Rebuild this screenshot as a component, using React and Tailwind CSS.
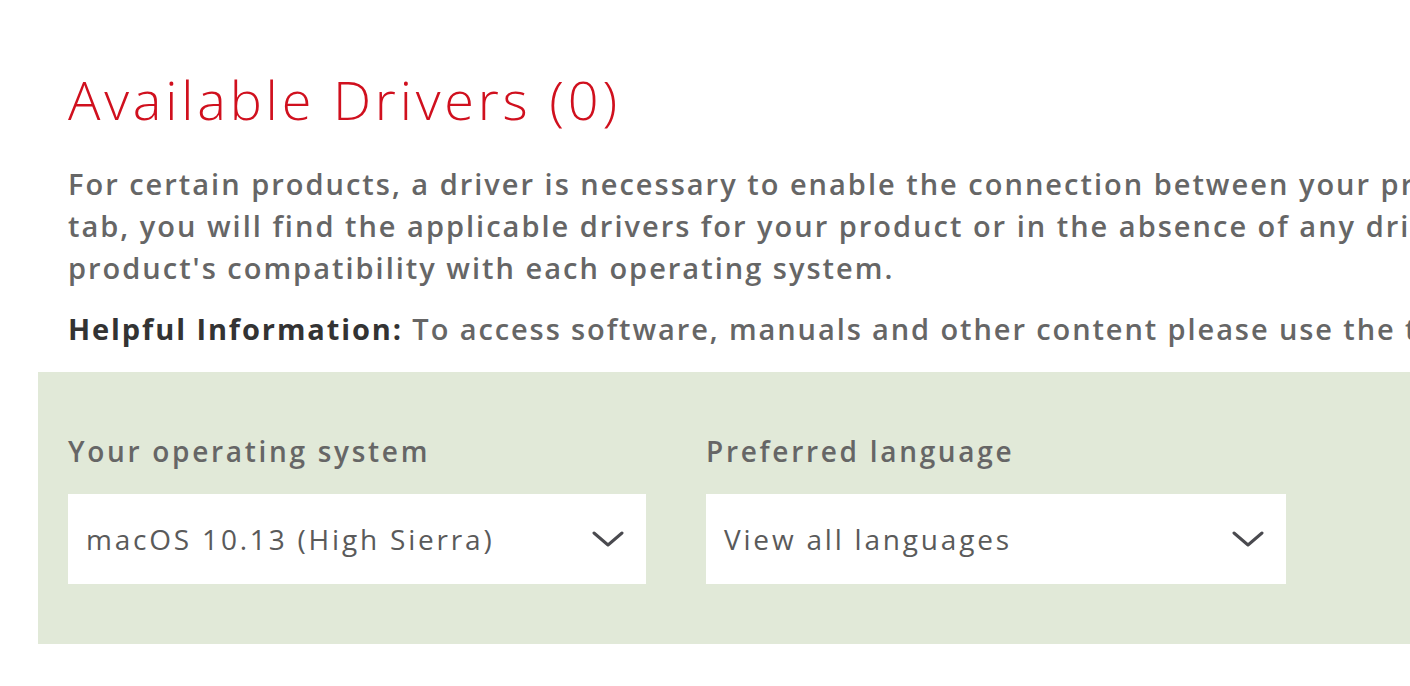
import React from 'react';

const Chevron = () => (
    <svg width="32" height="18" viewBox="0 0 32 18" fill="none">
        <polyline points="2,3 16,15 30,3" stroke="#4a4a4f" strokeWidth="3" strokeLinecap="round" strokeLinejoin="round" />
    </svg>
);

function Select({ value, className }) {
    return (
        <div className={"bg-white h-[90px] flex items-center justify-between pl-[18px] pr-[22px] " + className}>
            <span className="text-[28px] text-[#5a5a5a] tracking-[2.8px]">{value}</span>
            <Chevron />
        </div>
    );
}

export default function App() {
    return (
        <div className="w-full h-[686px] overflow-hidden bg-white font-['Open_Sans',sans-serif]">
            <div className="pl-[68px] pt-[68px]">
                <h1 className="text-[#d0101e] text-[54px] font-light leading-[62px] tracking-[3.8px]">Available Drivers (0)</h1>

                <div className="mt-[33px] text-[#666666] text-[29px] font-semibold leading-[42px] whitespace-nowrap tracking-[2px]">
                    <p>For certain products, a driver is necessary to enable the connection between your product and computer. Under the Drivers</p>
                    <p>tab, you will find the applicable drivers for your product or in the absence of any drivers, an explanation of your</p>
                    <p>product's compatibility with each operating system.</p>
                </div>

                <p className="mt-[19px] text-[#666666] text-[29px] font-semibold leading-[42px] whitespace-nowrap tracking-[1.9px]">
                    <span className="text-[#333333] font-bold">Helpful Information:</span> To access software, manuals and other content please use the tabs above.
                </p>
            </div>

            <div className="ml-[38px] mt-[22px] bg-[#e1e9d8] h-[272px] pl-[30px] pt-[62px] flex gap-[60px]">
                <div className="w-[578px]">
                    <div className="text-[#666666] text-[28px] font-semibold leading-[34px] tracking-[2.7px]">Your operating system</div>
                    <Select value="macOS 10.13 (High Sierra)" className="mt-[26px]" />
                </div>
                <div className="w-[580px]">
                    <div className="text-[#666666] text-[28px] font-semibold leading-[34px] tracking-[2.7px]">Preferred language</div>
                    <Select value="View all languages" className="mt-[26px]" />
                </div>
            </div>
        </div>
    );
}
